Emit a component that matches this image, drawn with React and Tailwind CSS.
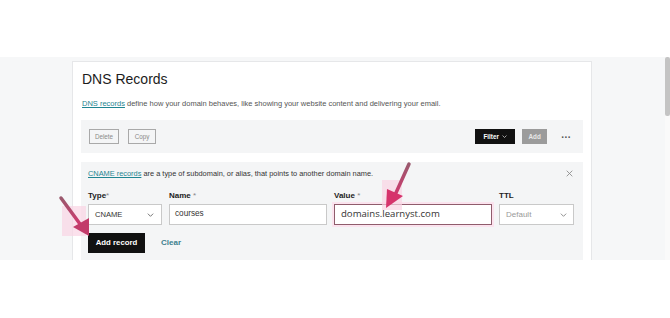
import React from 'react'

function Chevron({ className }) {
  return (
    <svg className={className} viewBox="0 0 10 6" fill="none" stroke="currentColor" strokeWidth="1.2">
      <path d="M1 1l4 4 4-4" />
    </svg>
  )
}

function Arrows() {
  // hand drawn callout arrows lying over the form
  return (
    <svg className="absolute left-0 top-0 pointer-events-none" width="670" height="318" viewBox="0 0 670 318">
      <defs>
        <linearGradient id="arr" x1="0" y1="0" x2="0" y2="1">
          <stop offset="0" stopColor="#9a5a6e" />
          <stop offset="1" stopColor="#d0386e" />
        </linearGradient>
      </defs>
      <rect x="62" y="206" width="24" height="30" fill="#f9d4e4" opacity="0.7" />
      <rect x="382" y="180" width="20" height="30" fill="#f9d4e4" opacity="0.7" />
      <path d="M61 198 L80 224" stroke="url(#arr)" strokeWidth="3.5" strokeLinecap="round" />
      <path d="M73 227 L89 218 L89 236 Z" fill="#c23b6a" />
      <path d="M409 164 L395 195" stroke="url(#arr)" strokeWidth="3.5" strokeLinecap="round" />
      <path d="M387 189 L403 196 L386 208 Z" fill="#d6336c" />
    </svg>
  )
}

export default function App() {
  return (
    <div className="relative w-[670px] h-[318px] bg-white overflow-hidden" style={{ fontFamily: '"Liberation Sans", Arial, sans-serif' }}>
      <div className="h-[57px]" />
      <div className="flex h-[203px] overflow-hidden">
        <div className="flex-1 flex bg-[#f6f7f8] pl-[72px] pt-[4px]">
          <div className="w-[520px] bg-white border border-b-0 border-[#e6e7e9] px-[8px] pt-[9px]">
            <div className="text-[14px] leading-[17px] text-[#1c1c1c] pl-[1px]">DNS Records</div>
            <p className="mt-[10px] text-[7.5px] leading-[11px] text-[#555] pl-[1px]">
              <span className="text-[#1f8591] underline">DNS records</span> define how your domain behaves, like showing your website content and delivering your email.
            </p>
            <div className="mt-[11px] h-[33px] bg-[#f4f5f6] flex items-center pl-[8px] pr-[12px]">
              <button className="h-[15px] w-[30px] border border-[#a9a9a9] text-[6.3px] text-[#8a8a8a] flex items-center justify-center">Delete</button>
              <button className="ml-[9px] h-[15px] w-[28px] border border-[#a9a9a9] text-[6.3px] text-[#8a8a8a] flex items-center justify-center">Copy</button>
              <div className="flex-1" />
              <button className="h-[15px] w-[40px] bg-[#111] text-white text-[6.3px] font-bold flex items-center justify-center gap-[3px]">
                Filter <Chevron className="w-[5px] h-[3px]" />
              </button>
              <button className="ml-[7px] h-[15px] w-[25px] bg-[#9b9b9b] text-[#e8e8e8] text-[6.3px] font-bold flex items-center justify-center">Add</button>
              <span className="ml-[14px] text-[10px] leading-none text-[#555] font-bold tracking-[0.5px] -mt-[4px]">...</span>
            </div>
            <div className="mt-[9px] h-[110px] bg-[#f4f5f6] pl-[7px] pr-[8px] pt-[6px]">
              <div className="flex items-center">
                <p className="flex-1 text-[7.4px] leading-[11px] text-[#333]">
                  <span className="text-[#1f8591] underline">CNAME records</span> are a type of subdomain, or alias, that points to another domain name.
                </p>
                <svg className="w-[7px] h-[7px] text-[#888] mr-[2px]" viewBox="0 0 10 10" stroke="currentColor" strokeWidth="1.2">
                  <path d="M1 1l8 8M9 1l-8 8" />
                </svg>
              </div>
              <div className="mt-[12px] flex gap-[7px]">
                <div className="w-[74px]">
                  <div className="text-[8px] leading-[10px] font-bold text-[#222]">Type<span className="font-normal text-[#888]">*</span></div>
                  <div className="mt-[3px] h-[21px] bg-white border border-[#c9c9c9] flex items-center justify-between pl-[6px] pr-[7px] text-[7.6px] text-[#333]">
                    CNAME <Chevron className="w-[7px] h-[4px] text-[#555]" />
                  </div>
                </div>
                <div className="w-[158px]">
                  <div className="text-[8px] leading-[10px] font-bold text-[#222]">Name <span className="font-normal text-[#888]">*</span></div>
                  <div className="mt-[3px] h-[21px] bg-white border border-[#c9c9c9] flex items-center px-[5px] text-[8.2px] text-[#333]">courses</div>
                </div>
                <div className="w-[158px]">
                  <div className="text-[8px] leading-[10px] font-bold text-[#222]">Value <span className="font-normal text-[#888]">*</span></div>
                  <div className="mt-[3px] h-[21px] bg-white border-[1.5px] border-[#8f5c6c] shadow-[0_0_0_2px_#fbe3ee] flex items-center px-[6px] text-[9.6px] text-[#333]" style={{ fontFamily: '"Open Sans", sans-serif' }}>domains.learnyst.com</div>
                </div>
                <div className="w-[75px]">
                  <div className="text-[8px] leading-[10px] font-bold text-[#222]">TTL</div>
                  <div className="mt-[3px] h-[21px] bg-white border border-[#c9c9c9] flex items-center justify-between px-[6px] text-[8px] text-[#999]">
                    Default <Chevron className="w-[7px] h-[4px] text-[#777]" />
                  </div>
                </div>
              </div>
              <div className="mt-[8px] flex items-center">
                <button className="h-[20px] w-[57px] bg-[#111] text-white text-[7.8px] font-bold flex items-center justify-center">Add record</button>
                <span className="ml-[16px] text-[8px] font-bold text-[#3c7f8e]">Clear</span>
              </div>
            </div>
          </div>
          <div className="flex-1" />
        </div>
        <div className="w-[5px] bg-[#fafafa] flex flex-col">
          <div className="h-[59px] bg-[#c4c4c4] rounded-[2px]" />
        </div>
      </div>
      <Arrows />
    </div>
  )
}
